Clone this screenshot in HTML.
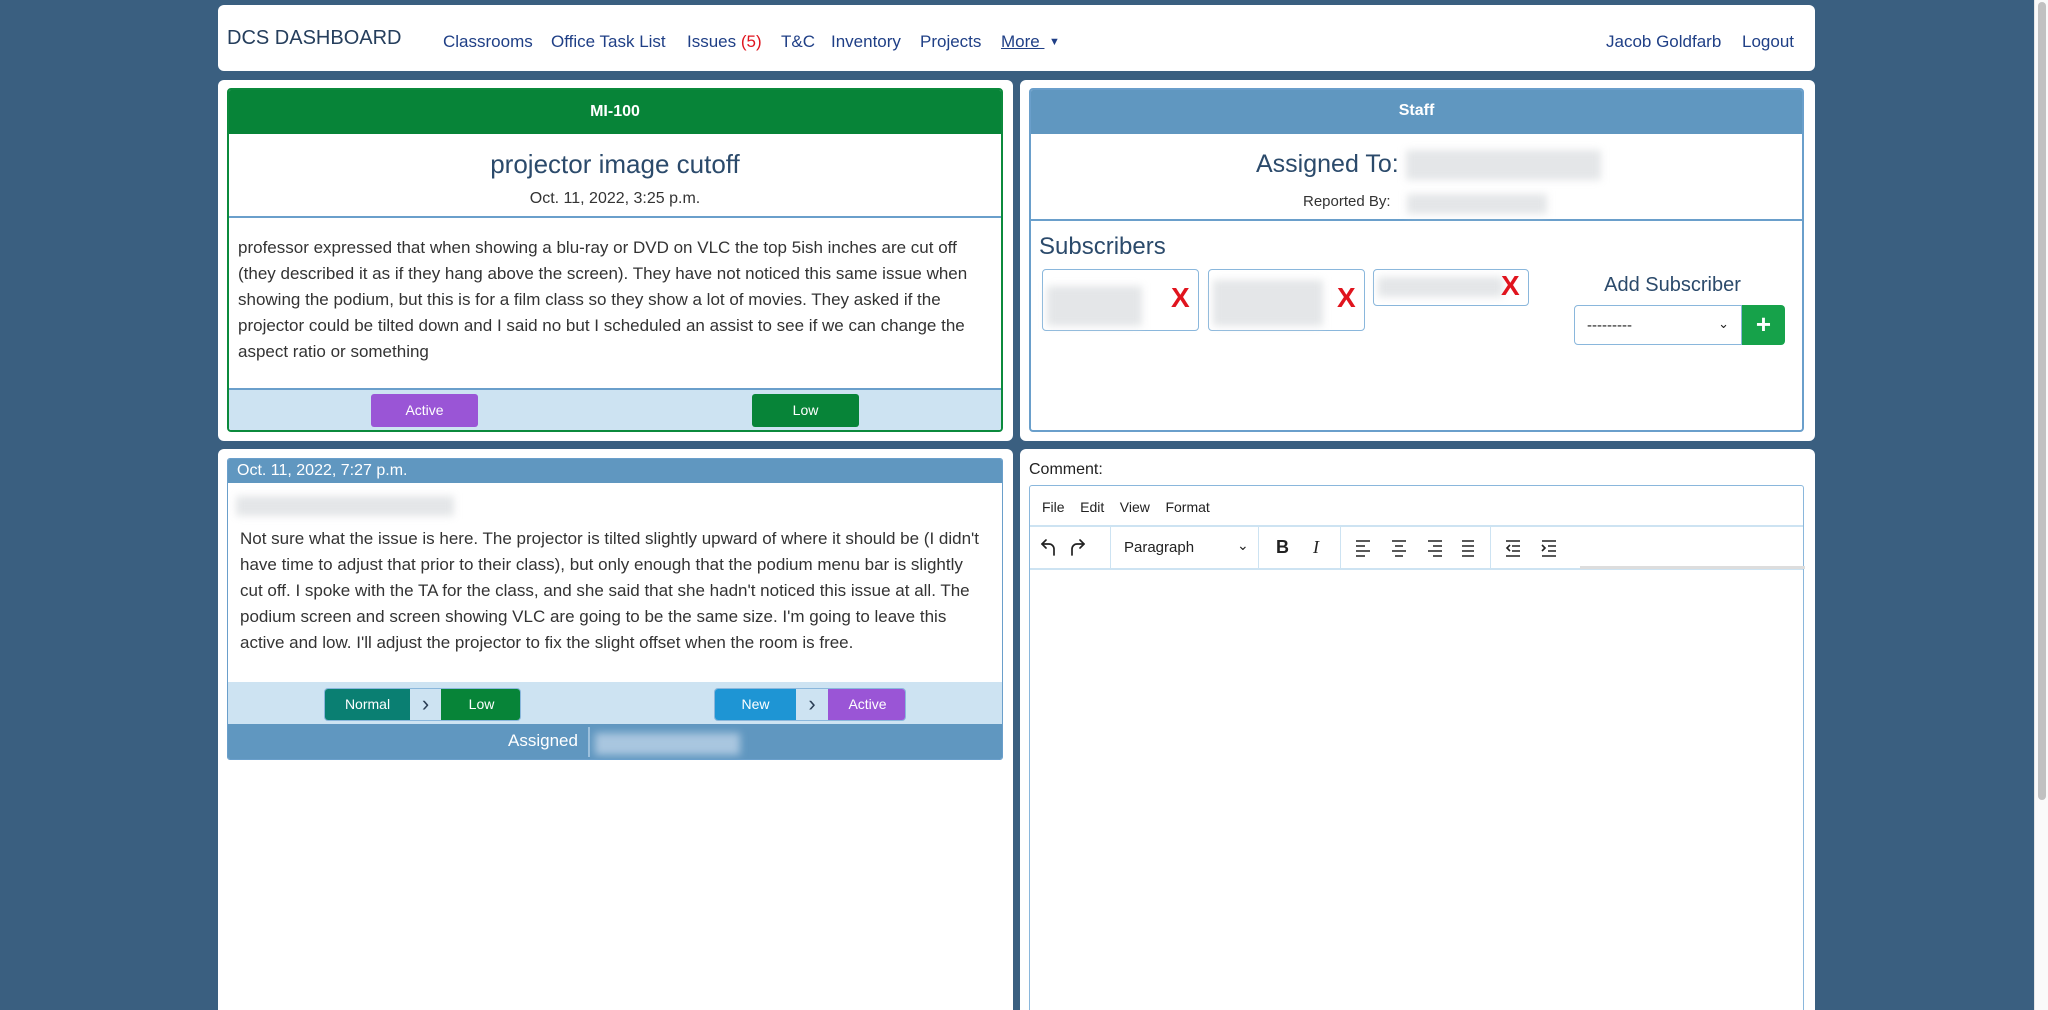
<!DOCTYPE html>
<html style="overflow:hidden;height:1010px"><head><meta charset="utf-8"><style>
*{box-sizing:border-box;margin:0;padding:0}
body{width:2048px;height:1010px;overflow:hidden;background:#3a5f80;font-family:"Liberation Sans",sans-serif;position:relative;color:#2b3e55}
.abs{position:absolute}
.white{background:#fff;border-radius:6px;position:absolute}
.nav a{position:absolute;top:32px;font-size:17px;color:#1f3f86;text-decoration:none}
.card{position:absolute;border:2px solid #6a9fcb;border-radius:4px;background:#fff;overflow:hidden}
.blur{position:absolute;background:#e4e6e8;filter:blur(4px)}
.btn{position:absolute;color:#fff;font-size:14px;text-align:center;border-radius:3px}
.x{position:absolute;color:#e0141e;font-size:28px;font-weight:bold;font-family:"Liberation Sans",sans-serif}
.chip{position:absolute;border:1.5px solid #8ab7dc;border-radius:4px;background:#fff}
</style></head><body>
<div class="white" style="left:218px;top:5px;width:1597px;height:66px"></div>
<div class="abs" style="left:227px;top:27px;font-size:20px;color:#253e5c">DCS DASHBOARD</div>
<div class="nav">
<a style="left:443px">Classrooms</a>
<a style="left:551px">Office Task List</a>
<a style="left:687px">Issues <span style="color:#e0141e">(5)</span></a>
<a style="left:781px">T&amp;C</a>
<a style="left:831px">Inventory</a>
<a style="left:920px">Projects</a>
<a style="left:1001px;text-decoration:underline">More&nbsp;</a>
<a style="left:1049px;font-size:11px;top:36px">▼</a>
<a style="left:1606px">Jacob Goldfarb</a>
<a style="left:1742px">Logout</a>
</div>

<!-- top-left -->
<div class="white" style="left:218px;top:80px;width:795px;height:361px"></div>
<div class="card" style="left:227px;top:88px;width:776px;height:344px;border-color:#0b8a3c">
 <div style="height:44px;background:#078438;color:#fff;font-weight:bold;font-size:16px;text-align:center;line-height:44px">MI-100</div>
 <div style="height:84px;border-bottom:2px solid #6a9fcb;text-align:center">
  <div style="font-size:26px;color:#2b4a6b;padding-top:15px">projector image cutoff</div>
  <div style="font-size:16px;color:#333;margin-top:10px">Oct. 11, 2022, 3:25 p.m.</div>
 </div>
 <div style="padding:17px 9px 0 9px;font-size:17px;line-height:26px;color:#333;height:170px">professor expressed that when showing a blu-ray or DVD on VLC the top 5ish inches are cut off (they described it as if they hang above the screen). They have not noticed this same issue when showing the podium, but this is for a film class so they show a lot of movies. They asked if the projector could be tilted down and I said no but I scheduled an assist to see if we can change the aspect ratio or something</div>
 <div style="position:absolute;left:0;right:0;top:298px;bottom:0;background:#cde3f2;border-top:2px solid #6a9fcb"></div>
 <div class="btn" style="left:142px;top:304px;width:107px;height:33px;line-height:33px;background:#9a55d6">Active</div>
 <div class="btn" style="left:523px;top:304px;width:107px;height:33px;line-height:33px;background:#078438">Low</div>
</div>

<!-- top-right -->
<div class="white" style="left:1020px;top:80px;width:795px;height:361px"></div>
<div class="card" style="left:1029px;top:88px;width:775px;height:344px">
 <div style="height:44px;background:#6097c0;color:#fff;font-weight:bold;font-size:16px;text-align:center;line-height:42px">Staff</div>
 <div style="height:87px;border-bottom:2px solid #6a9fcb;position:relative">
  <div style="position:absolute;left:225px;top:16px;font-size:25px;color:#2b4a6b">Assigned To:</div>
  <div class="blur" style="left:375px;top:16px;width:195px;height:30px"></div>
  <div style="position:absolute;left:272px;top:59px;font-size:15px;color:#333">Reported By:</div>
  <div class="blur" style="left:376px;top:60px;width:140px;height:20px"></div>
 </div>
 <div style="position:absolute;left:8px;top:143px;font-size:24px;color:#2b4a6b">Subscribers</div>
 <div class="chip" style="left:11px;top:179px;width:157px;height:62px"><div class="blur" style="left:4px;top:16px;width:95px;height:40px"></div><div class="x" style="left:128px;top:12px">X</div></div>
 <div class="chip" style="left:177px;top:179px;width:157px;height:62px"><div class="blur" style="left:4px;top:10px;width:110px;height:46px"></div><div class="x" style="left:128px;top:12px">X</div></div>
 <div class="chip" style="left:342px;top:179px;width:156px;height:37px"><div class="blur" style="left:4px;top:7px;width:125px;height:20px"></div><div class="x" style="left:127px;top:0px">X</div></div>
 <div style="position:absolute;left:536px;top:184px;width:211px;text-align:center;font-size:20px;color:#2b4a6b">Add Subscriber</div>
 <div style="position:absolute;left:543px;top:215px;width:168px;height:40px;border:1.5px solid #8ab7dc;border-radius:4px 0 0 4px;font-size:15px;padding:11px 12px;color:#222">---------<span style="position:absolute;right:12px;top:10px;font-size:13px">⌄</span></div>
 <div style="position:absolute;left:711px;top:215px;width:43px;height:40px;background:#16a24a;border-radius:0 4px 4px 0;color:#fff;font-size:26px;font-weight:bold;text-align:center;line-height:38px">+</div>
</div>

<!-- bottom-left -->
<div class="white" style="left:218px;top:449px;width:795px;height:561px;border-radius:6px 6px 0 0"></div>
<div class="card" style="left:227px;top:458px;width:776px;height:302px;border-width:1.5px;border-radius:3px">
 <div style="height:24px;background:#6097c0;color:#fff;font-size:16px;line-height:24px;padding-left:9px">Oct. 11, 2022, 7:27 p.m.</div>
 <div class="blur" style="left:8px;top:37px;width:218px;height:20px"></div>
 <div style="position:absolute;left:12px;top:67px;right:16px;font-size:17px;line-height:26px;color:#333">Not sure what the issue is here. The projector is tilted slightly upward of where it should be (I didn't have time to adjust that prior to their class), but only enough that the podium menu bar is slightly cut off. I spoke with the TA for the class, and she said that she hadn't noticed this issue at all. The podium screen and screen showing VLC are going to be the same size. I'm going to leave this active and low. I'll adjust the projector to fix the slight offset when the room is free.</div>
 <div style="position:absolute;left:0;right:0;top:223px;height:42px;background:#cde3f2"></div>
 <div style="position:absolute;left:96px;top:229px;width:197px;height:33px;border-radius:4px;overflow:hidden;background:#cde3f2;border:1px solid #8ab7dc">
  <div class="btn" style="left:0;top:0;width:85px;height:33px;line-height:31px;background:#0a7f72;border-radius:0">Normal</div>
  <div style="position:absolute;left:85px;top:0;width:31px;height:33px;text-align:center;font-size:22px;line-height:30px;color:#2b3e55">›</div>
  <div class="btn" style="left:116px;top:0;width:81px;height:33px;line-height:31px;background:#078438;border-radius:0">Low</div>
 </div>
 <div style="position:absolute;left:486px;top:229px;width:192px;height:33px;border-radius:4px;overflow:hidden;background:#cde3f2;border:1px solid #8ab7dc">
  <div class="btn" style="left:0;top:0;width:81px;height:33px;line-height:31px;background:#1e95d4;border-radius:0">New</div>
  <div style="position:absolute;left:81px;top:0;width:32px;height:33px;text-align:center;font-size:22px;line-height:30px;color:#2b3e55">›</div>
  <div class="btn" style="left:113px;top:0;width:79px;height:33px;line-height:31px;background:#9a55d6;border-radius:0">Active</div>
 </div>
 <div style="position:absolute;left:0;right:0;top:265px;bottom:0;background:#6097c0"></div>
 <div style="position:absolute;left:280px;top:272px;color:#fff;font-size:17px">Assigned</div>
 <div style="position:absolute;left:360px;top:268px;width:2px;height:30px;background:#9cc0dc"></div>
 <div class="blur" style="left:367px;top:274px;width:145px;height:22px;background:#a9c6df"></div>
</div>

<!-- bottom-right -->
<div class="white" style="left:1020px;top:449px;width:795px;height:561px;border-radius:6px 6px 0 0"></div>
<div class="abs" style="left:1029px;top:461px;font-size:16px;color:#222">Comment:</div>
<div class="abs" style="left:1029px;top:485px;width:775px;height:530px;border:1.5px solid #8ab7dc;border-radius:3px;background:#fff">
 <div style="height:41px;border-bottom:2px solid #cde3f2;font-size:14px;color:#222;padding:13px 12px">File&nbsp;&nbsp;&nbsp; Edit&nbsp;&nbsp;&nbsp; View&nbsp;&nbsp;&nbsp; Format</div>
 <div style="height:43px;border-bottom:2px solid #cde3f2;position:relative;font-size:15px;color:#222">
  <svg class="abs" style="left:10px;top:10px" width="50" height="22" viewBox="0 0 50 22" fill="none" stroke="#222" stroke-width="1.7" stroke-linecap="round" stroke-linejoin="round"><path d="M6 3L2 7l4 4"/><path d="M2 7h7a5 5 0 0 1 5 5v6"/><path d="M40 3l4 4-4 4"/><path d="M44 7h-7a5 5 0 0 0-5 5v6"/></svg>
  <div class="abs" style="left:80px;top:0;width:1px;height:41px;background:#cde3f2"></div>
  <div class="abs" style="left:94px;top:12px">Paragraph</div>
  <div class="abs" style="left:207px;top:10px;font-size:14px">⌄</div>
  <div class="abs" style="left:228px;top:0;width:1px;height:41px;background:#cde3f2"></div>
  <div class="abs" style="left:246px;top:10px;font-size:18px;font-weight:bold">B</div>
  <div class="abs" style="left:283px;top:10px;font-size:18px;font-style:italic;font-family:'Liberation Serif',serif">I</div>
  <div class="abs" style="left:310px;top:0;width:1px;height:41px;background:#cde3f2"></div>
  <svg class="abs" style="left:324px;top:12px" width="120" height="18" viewBox="0 0 120 18" stroke="#222" stroke-width="1.6"><path d="M2 2h14M2 7h9M2 12h14M2 17h9"/><path d="M38 2h14M41 7h8M38 12h14M41 17h8"/><path d="M74 2h14M79 7h9M74 12h14M79 17h9"/><path d="M108 2h14M108 7h14M108 12h14M108 17h14"/></svg>
  <div class="abs" style="left:460px;top:0;width:1px;height:41px;background:#cde3f2"></div>
  <svg class="abs" style="left:474px;top:12px" width="60" height="18" viewBox="0 0 60 18" stroke="#222" stroke-width="1.6" fill="none"><path d="M2 2h14M8 7h8M8 12h8M2 17h14M6 6l-3 3 3 3"/><path d="M38 2h14M44 7h8M44 12h8M38 17h14M38 6l3 3-3 3"/></svg>
  <div class="abs" style="left:550px;top:39px;width:225px;height:3px;background:#ddd"></div>
 </div>
</div>

<div class="abs" style="left:2034px;top:0;width:14px;height:1010px;background:#fafafa;border-left:1px solid #e5e5e5"></div>
<div class="abs" style="left:2038px;top:2px;width:8px;height:798px;background:#c1c1c1;border-radius:4px"></div>
</body></html>
